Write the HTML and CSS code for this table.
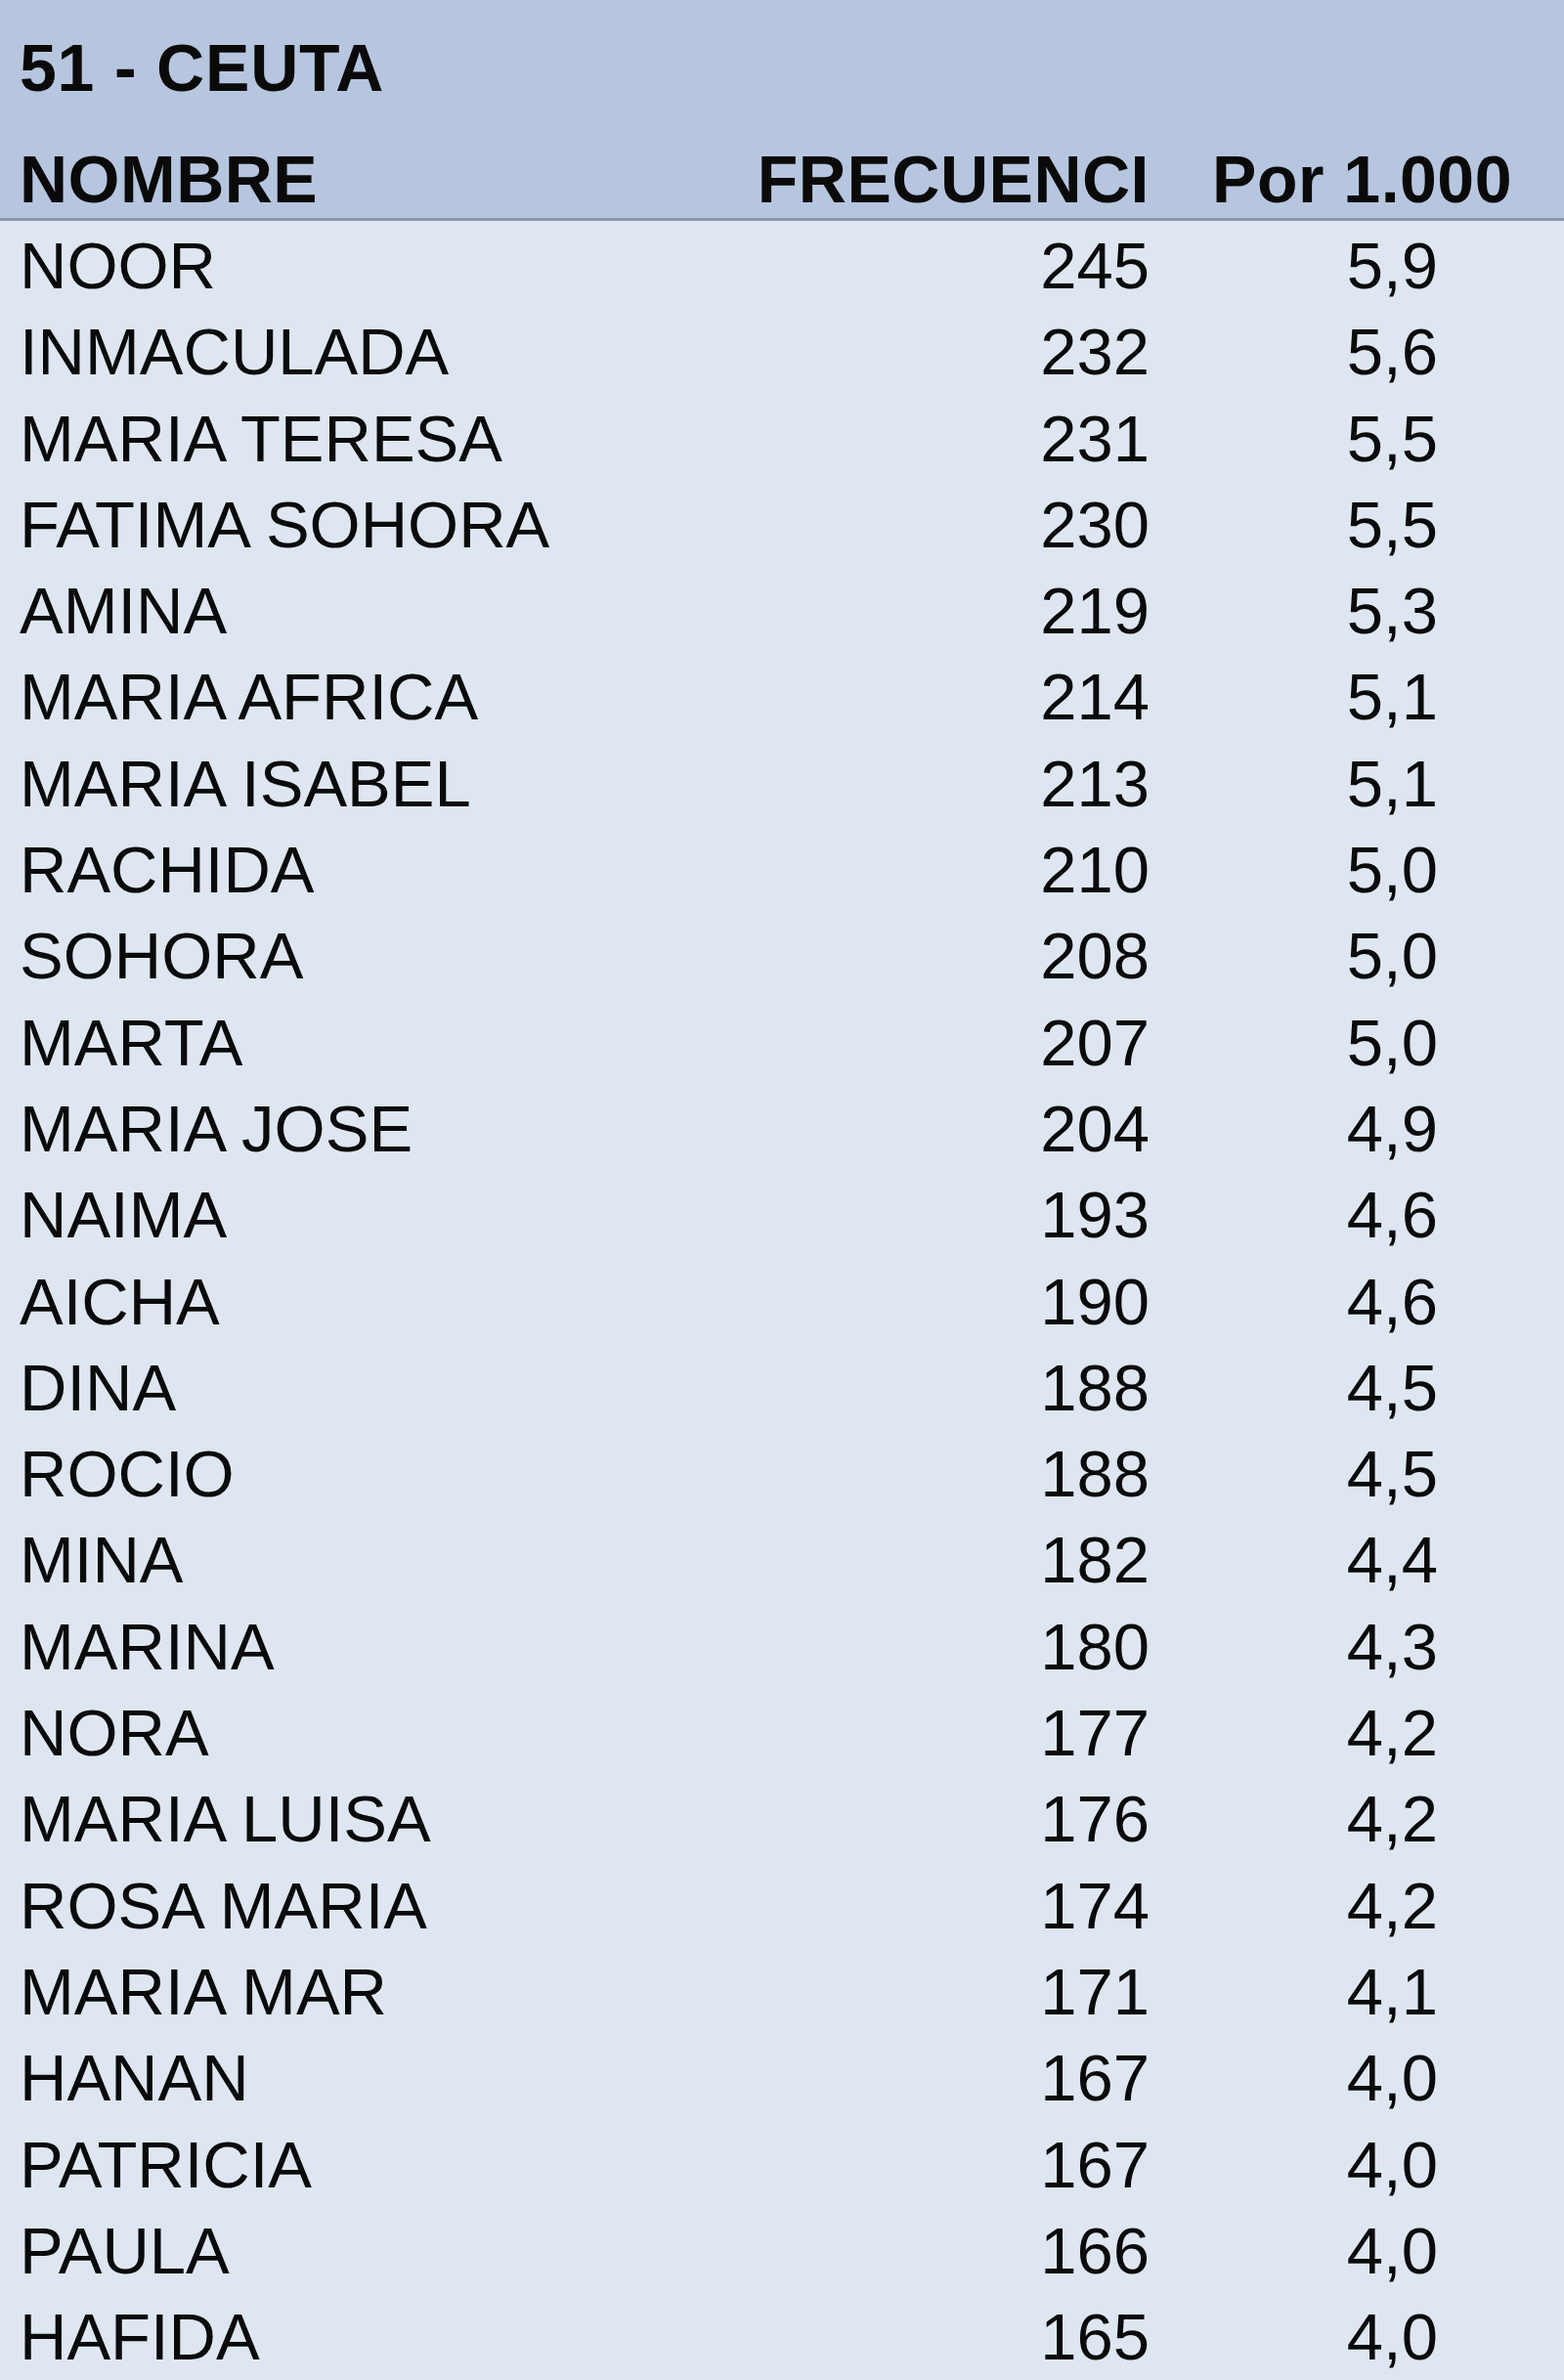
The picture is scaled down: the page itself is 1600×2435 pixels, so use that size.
FILE: index.html
```html
<!DOCTYPE html>
<html lang="es">
<head>
<meta charset="utf-8">
<title>51 - CEUTA</title>
<link rel="stylesheet" href="styles.css">
</head>
<body>
<div class="sheet">
  <div class="header">
    <div class="title">51 - CEUTA</div>
    <div class="row head-row">
      <div class="c-name">NOMBRE</div>
      <div class="c-freq">FRECUENCI</div>
      <div class="c-por">Por 1.000</div>
    </div>
  </div>
  <div class="data">
    <div class="row"><div class="c-name">NOOR</div><div class="c-freq">245</div><div class="c-por">5,9</div></div>
    <div class="row"><div class="c-name">INMACULADA</div><div class="c-freq">232</div><div class="c-por">5,6</div></div>
    <div class="row"><div class="c-name">MARIA TERESA</div><div class="c-freq">231</div><div class="c-por">5,5</div></div>
    <div class="row"><div class="c-name">FATIMA SOHORA</div><div class="c-freq">230</div><div class="c-por">5,5</div></div>
    <div class="row"><div class="c-name">AMINA</div><div class="c-freq">219</div><div class="c-por">5,3</div></div>
    <div class="row"><div class="c-name">MARIA AFRICA</div><div class="c-freq">214</div><div class="c-por">5,1</div></div>
    <div class="row"><div class="c-name">MARIA ISABEL</div><div class="c-freq">213</div><div class="c-por">5,1</div></div>
    <div class="row"><div class="c-name">RACHIDA</div><div class="c-freq">210</div><div class="c-por">5,0</div></div>
    <div class="row"><div class="c-name">SOHORA</div><div class="c-freq">208</div><div class="c-por">5,0</div></div>
    <div class="row"><div class="c-name">MARTA</div><div class="c-freq">207</div><div class="c-por">5,0</div></div>
    <div class="row"><div class="c-name">MARIA JOSE</div><div class="c-freq">204</div><div class="c-por">4,9</div></div>
    <div class="row"><div class="c-name">NAIMA</div><div class="c-freq">193</div><div class="c-por">4,6</div></div>
    <div class="row"><div class="c-name">AICHA</div><div class="c-freq">190</div><div class="c-por">4,6</div></div>
    <div class="row"><div class="c-name">DINA</div><div class="c-freq">188</div><div class="c-por">4,5</div></div>
    <div class="row"><div class="c-name">ROCIO</div><div class="c-freq">188</div><div class="c-por">4,5</div></div>
    <div class="row"><div class="c-name">MINA</div><div class="c-freq">182</div><div class="c-por">4,4</div></div>
    <div class="row"><div class="c-name">MARINA</div><div class="c-freq">180</div><div class="c-por">4,3</div></div>
    <div class="row"><div class="c-name">NORA</div><div class="c-freq">177</div><div class="c-por">4,2</div></div>
    <div class="row"><div class="c-name">MARIA LUISA</div><div class="c-freq">176</div><div class="c-por">4,2</div></div>
    <div class="row"><div class="c-name">ROSA MARIA</div><div class="c-freq">174</div><div class="c-por">4,2</div></div>
    <div class="row"><div class="c-name">MARIA MAR</div><div class="c-freq">171</div><div class="c-por">4,1</div></div>
    <div class="row"><div class="c-name">HANAN</div><div class="c-freq">167</div><div class="c-por">4,0</div></div>
    <div class="row"><div class="c-name">PATRICIA</div><div class="c-freq">167</div><div class="c-por">4,0</div></div>
    <div class="row"><div class="c-name">PAULA</div><div class="c-freq">166</div><div class="c-por">4,0</div></div>
    <div class="row"><div class="c-name">HAFIDA</div><div class="c-freq">165</div><div class="c-por">4,0</div></div>
  </div>
</div>
</body>
</html>
```
FILE: styles.css
```css
html, body {
  margin: 0;
  padding: 0;
  background: #dee7f1;
}

.sheet {
  width: 1600px;
  height: 2435px;
  overflow: hidden;
  font-family: "Liberation Sans", Arial, sans-serif;
  color: #0a0a0a;
}

.header {
  background: #b7c6df;
  border-bottom: 3px solid #8d98a8;
}

.title {
  padding: 25px 0 0 20px;
  font-size: 68px;
  font-weight: bold;
  line-height: 88px;
  letter-spacing: 0.8px;
}

.row {
  display: grid;
  grid-template-columns: 700px 490px 410px;
  font-size: 67px;
  line-height: 88.3px;
}

.head-row {
  margin-top: 30px;
  font-size: 68px;
  font-weight: bold;
  line-height: 80px;
  letter-spacing: 0.5px;
}

.c-name {
  padding-left: 20px;
  white-space: nowrap;
}

.c-freq {
  text-align: right;
  padding-right: 14px;
  white-space: nowrap;
}

.c-por {
  text-align: right;
  padding-right: 129px;
  white-space: nowrap;
}

.head-row .c-por {
  padding-right: 53px;
}

.data {
  padding-top: 2px;
  background: #dee7f1;
}
```
